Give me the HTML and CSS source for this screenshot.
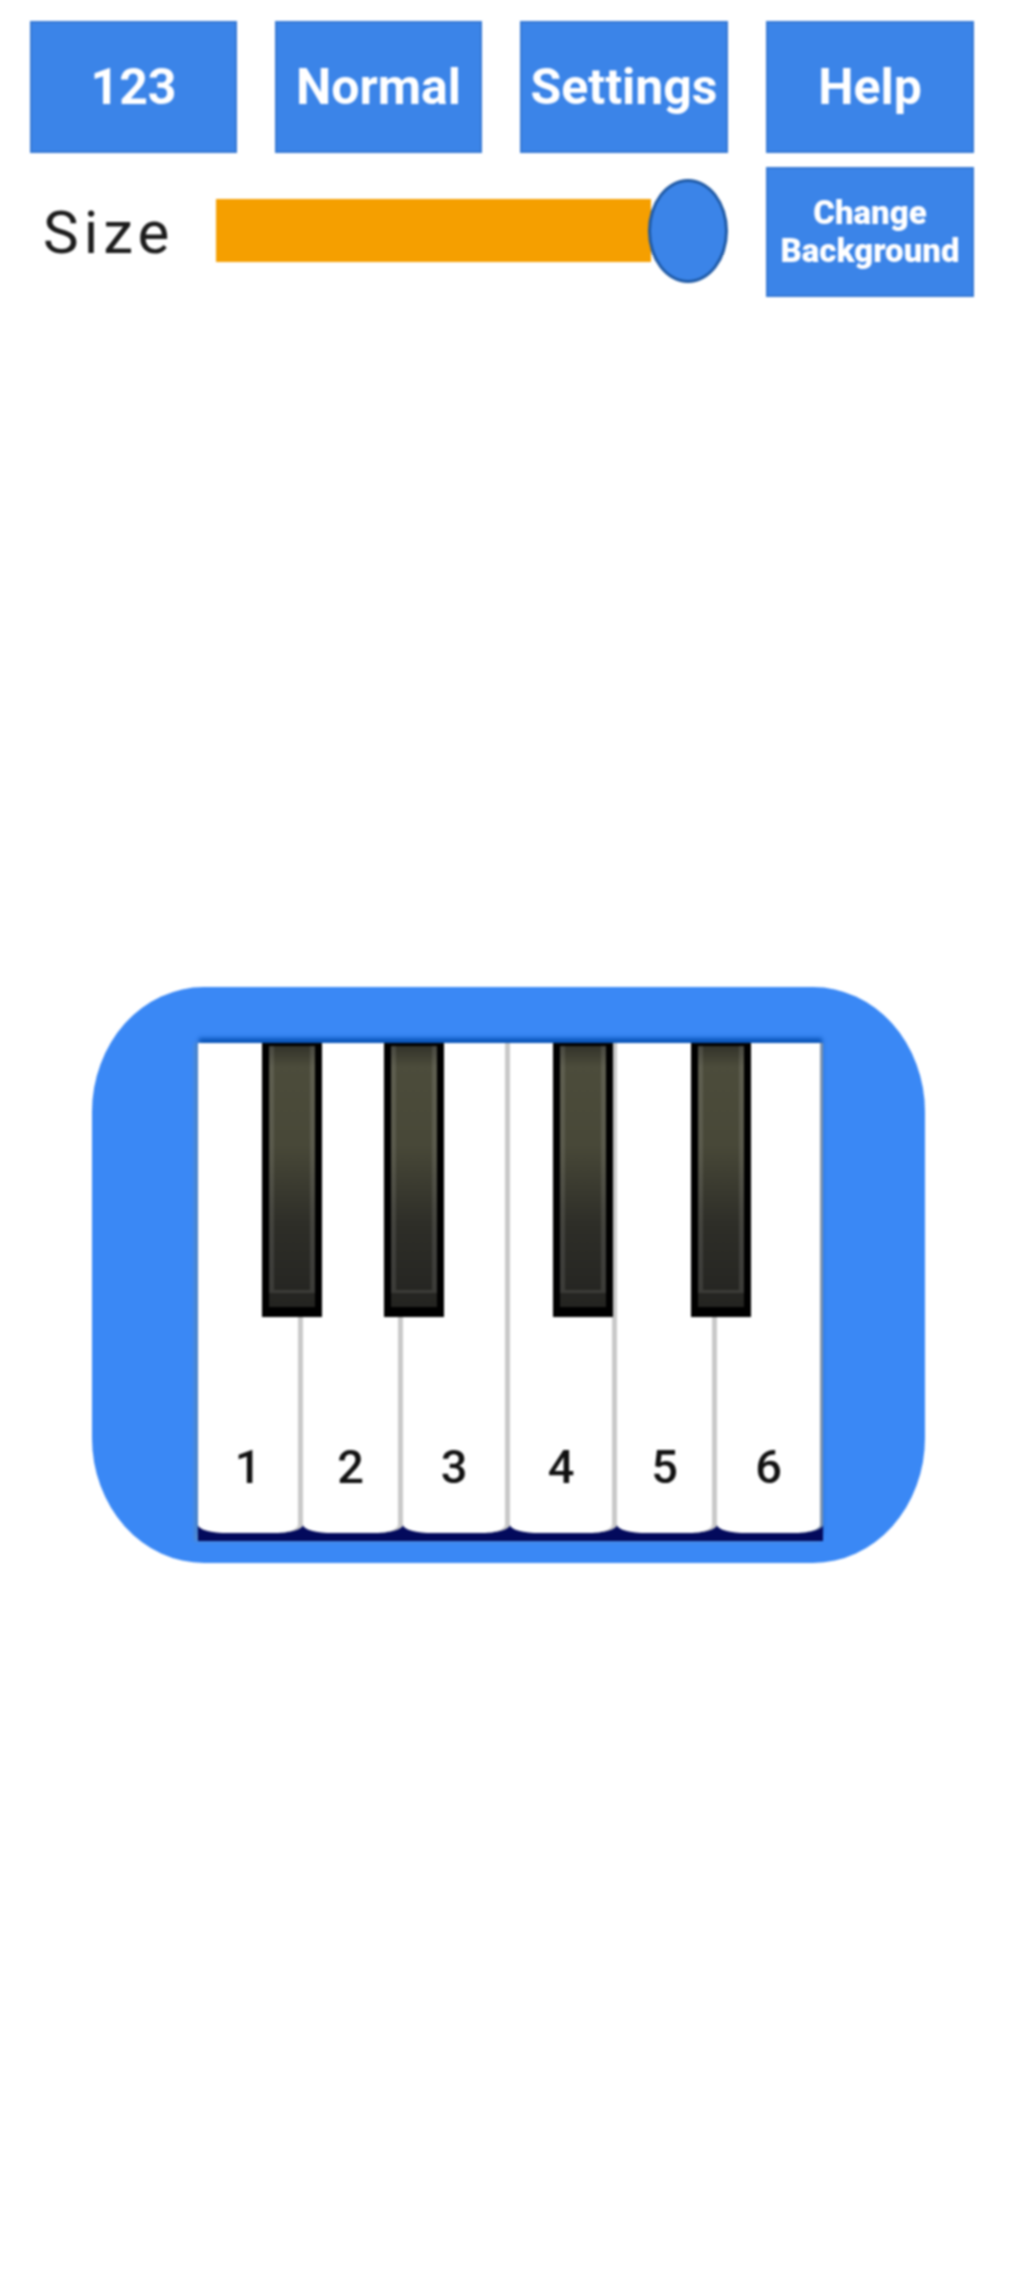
FILE: index.html
```html
<!DOCTYPE html>
<html>
<head>
    <title>Piano</title>
    <meta name="viewport" content="width=device-width, initial-scale=1.0">
    <link rel="stylesheet" href="styles.css">
</head>
<body>
<main>
    <div class="toolbar">
        <button type="button" class="tool-button">123</button>
        <button type="button" class="tool-button">Normal</button>
        <button type="button" class="tool-button">Settings</button>
        <button type="button" class="tool-button">Help</button>

        <div class="size-row">
            <span class="size-label">Size</span>
            <div class="size-track"></div>
            <div class="size-thumb"></div>
        </div>
        <button type="button" class="tool-button tool-button-small">Change<br>Background</button>
    </div>

    <div class="piano">
        <div class="keyboard">
            <div class="white-key"><span>1</span></div>
            <div class="white-key"><span>2</span></div>
            <div class="white-key"><span>3</span></div>
            <div class="white-key"><span>4</span></div>
            <div class="white-key"><span>5</span></div>
            <div class="white-key"><span>6</span></div>

            <div class="black-key black-key-1"></div>
            <div class="black-key black-key-2"></div>
            <div class="black-key black-key-3"></div>
            <div class="black-key black-key-4"></div>
        </div>
    </div>
</main>
</body>
</html>
```

FILE: styles.css
```css
body {
    margin: 0;
    background-color: #fff;
    font-family: Roboto, "Liberation Sans", sans-serif;
}

main {
    min-height: 2270px;
    box-sizing: border-box;
    padding: 21px 0 0 30px;
    /* the whole screen is soft, like an upscaled capture */
    filter: blur(1.3px);
}

.toolbar {
    display: grid;
    grid-template-columns: 207px 207px 208px 208px;
    grid-template-rows: 132px 130px;
    column-gap: 38px;
    row-gap: 14px;
}

.tool-button {
    border: none;
    padding: 0;
    background-color: #3b84e8;
    box-shadow: inset 0 0 0 2px #3578d4;
    color: #fff;
    font-family: inherit;
    font-size: 50px;
    font-weight: 700;
    white-space: nowrap;
}

.tool-button-small {
    font-size: 33px;
    font-weight: 900;
    line-height: 38px;
}

.size-row {
    grid-column: 1 / 4;
    display: flex;
    align-items: center;
}

.size-label {
    width: 186px;
    box-sizing: border-box;
    padding-left: 13px;
    color: #1c1c1c;
    font-size: 60px;
    letter-spacing: 5px;
}

.size-track {
    flex: 1;
    height: 63px;
    margin: -3px -3px 0 0;
    background-color: #f59f00;
}

.size-thumb {
    position: relative;
    width: 80px;
    height: 104px;
    margin-top: -3px;
    box-sizing: border-box;
    border: 3px solid #1f5aa6;
    border-radius: 50%;
    background-color: #3b84e8;
}

.piano {
    width: 833px;
    height: 576px;
    box-sizing: border-box;
    margin: 690px 0 0 62px;
    padding: 56px 102px 22px 106px;
    border-radius: 112px / 125px;
    background-color: #3a88f5;
}

.keyboard {
    position: relative;
    display: grid;
    grid-template-columns: 105px 100px 107px 107px 100px 106px;
    height: 498px;
    background-color: #030a5c;
    box-shadow: 0 -6px 4px -1px #0a55ba, -3px 0 4px #5a8cc4;
}

.white-key {
    display: flex;
    justify-content: center;
    align-items: flex-end;
    height: 490px;
    box-sizing: border-box;
    padding-bottom: 43px;
    border-right: 5px solid #c9c9c9;
    border-radius: 0 0 30px 30px / 0 0 8px 8px;
    background-color: #fff;
    color: #111;
    font-size: 47px;
    font-weight: 500;
    line-height: 47px;
}

.white-key:nth-child(6) {
    border-right: 3px solid #7f94ad;
}

.black-key {
    position: absolute;
    top: 0;
    width: 60px;
    height: 274px;
    box-sizing: border-box;
    border: solid #000;
    border-width: 3px 7px 10px;
    background: linear-gradient(180deg, #33332a 0%, #4c4c3b 8%, #484838 38%, #2e2e28 68%, #242421 100%);
}

.black-key::after {
    content: "";
    display: block;
    height: 244px;
    border: solid rgba(255, 255, 255, .1);
    border-width: 0 5px 3px;
}

.black-key-1 { left: 64px; }
.black-key-2 { left: 186px; }
.black-key-3 { left: 355px; }
.black-key-4 { left: 493px; }
```
